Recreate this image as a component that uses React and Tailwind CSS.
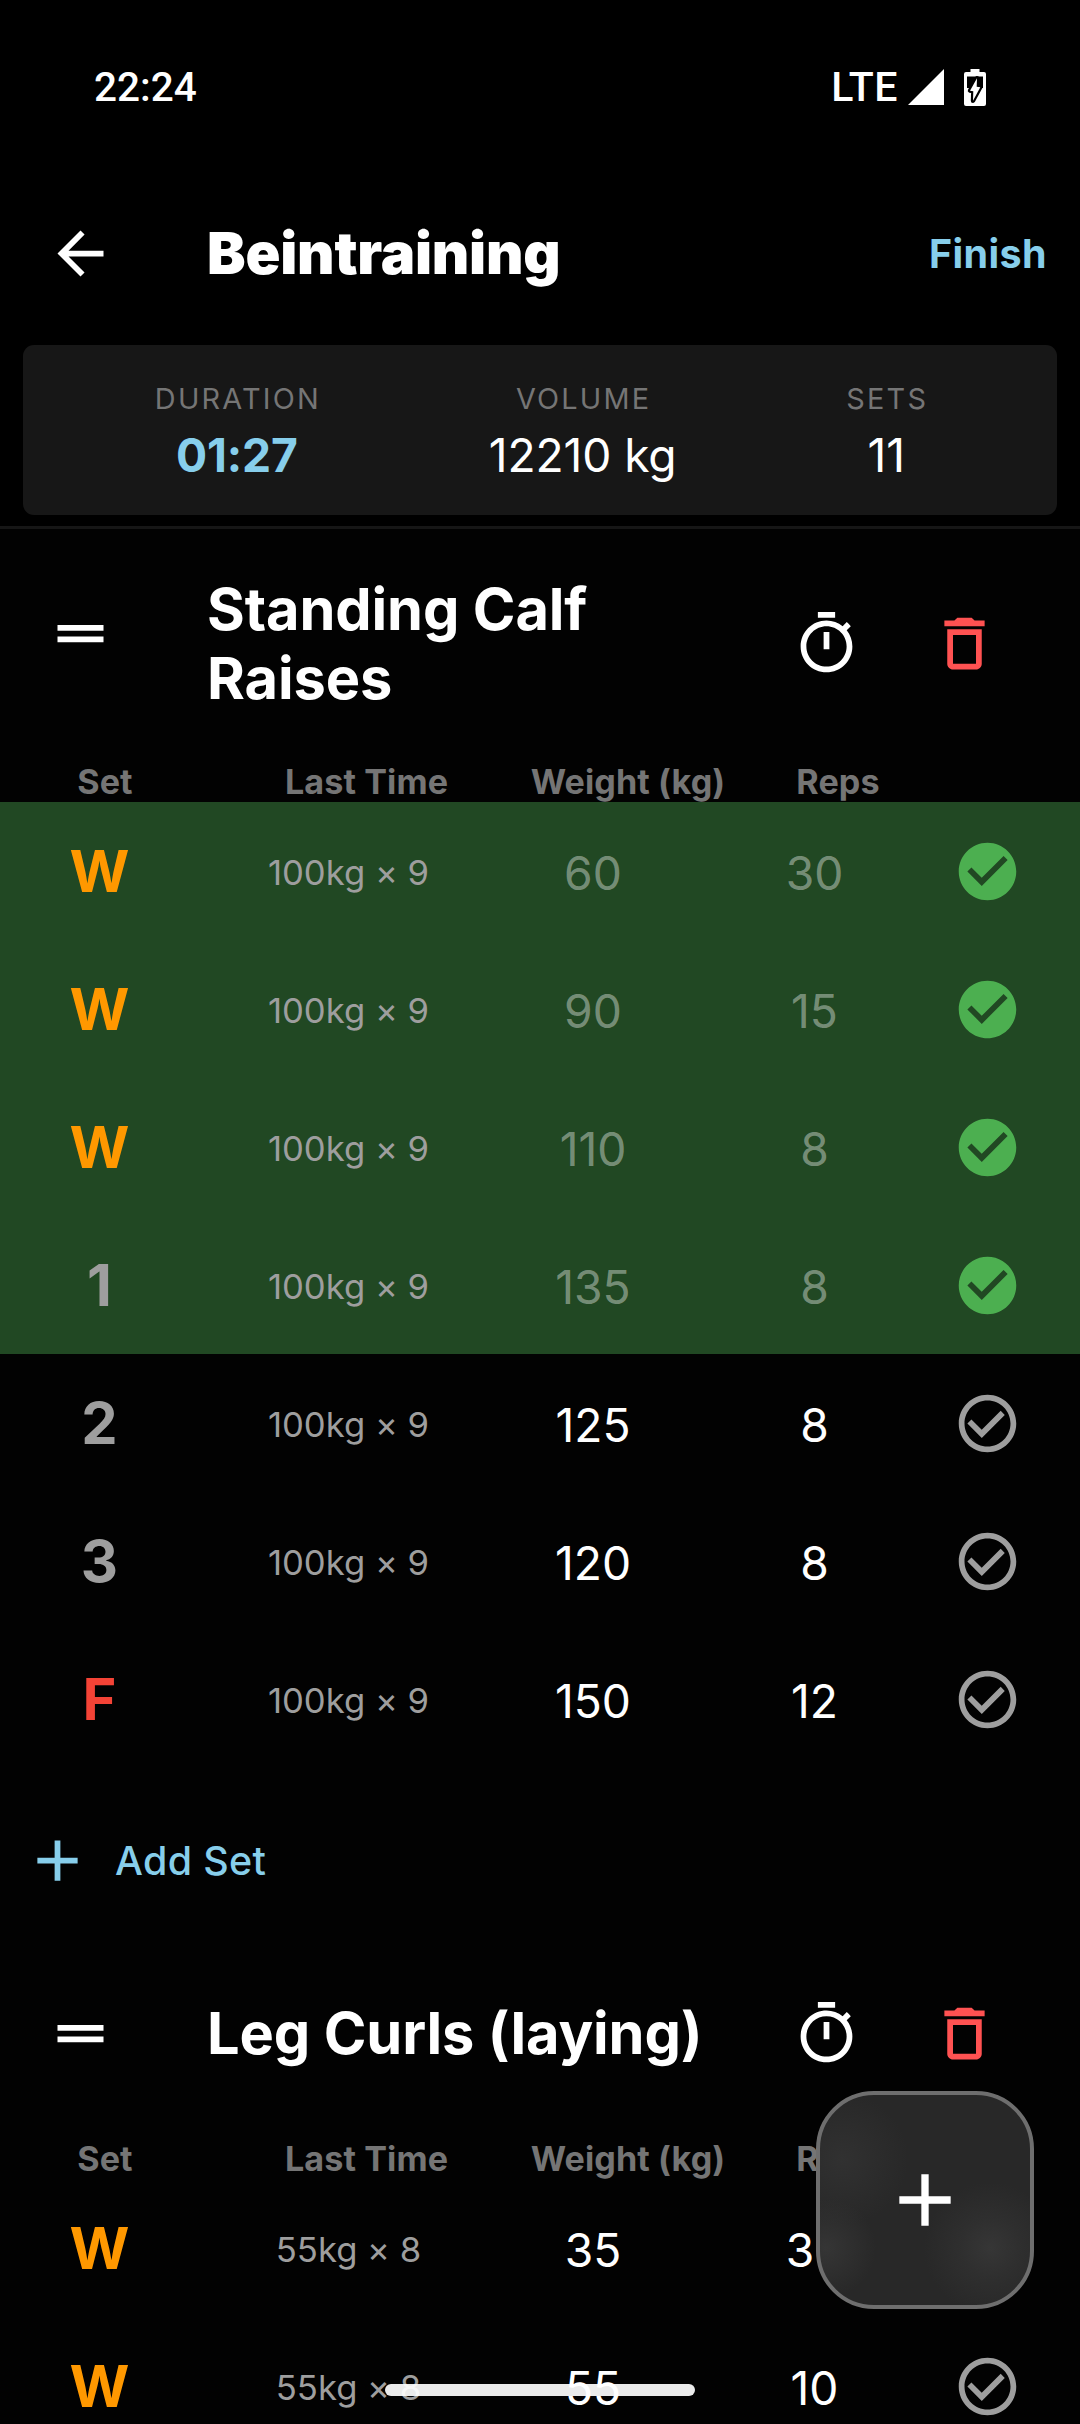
import React from "react";

const PATHS = {
  back: "M20 11H7.83l5.59-5.59L12 4l-8 8 8 8 1.41-1.41L7.83 13H20v-2z",
  drag: "M20 9H4v2h16V9zM4 15h16v-2H4v2z",
  timer:
    "M15 1H9v2h6V1zm-4 13h2V8h-2v6zm8.03-6.61l1.42-1.42c-.43-.51-.9-.99-1.41-1.41l-1.42 1.42C16.07 4.74 14.12 4 12 4c-4.97 0-9 4.03-9 9s4.02 9 9 9 9-4.03 9-9c0-2.12-.74-4.07-1.97-5.61zM12 20c-3.87 0-7-3.13-7-7s3.13-7 7-7 7 3.13 7 7-3.13 7-7 7z",
  trash:
    "M6 19c0 1.1.9 2 2 2h8c1.1 0 2-.9 2-2V7H6v12zM8 9h8v10H8V9zm7.5-5l-1-1h-5l-1 1H5v2h14V4h-3.5z",
  done:
    "M12 2C6.48 2 2 6.48 2 12s4.48 10 10 10 10-4.48 10-10S17.52 2 12 2zm-2 15l-5-5 1.41-1.41L10 14.17l7.59-7.59L19 8l-9 9z",
  todo:
    "M16.59 7.58L10 14.17l-3.59-3.58L5 12l5 5 8-8-1.41-1.42zM12 2C6.48 2 2 6.48 2 12s4.48 10 10 10 10-4.48 10-10S17.52 2 12 2zm0 18c-4.42 0-8-3.58-8-8s3.58-8 8-8 8 3.58 8 8-3.58 8-8 8z",
  plus: "M19 13h-6v6h-2v-6H5v-2h6V5h2v6h6v2z",
};

function Icon({ name, className = "size-[69px]" }) {
  return (
    <svg viewBox="0 0 24 24" fill="currentColor" className={`shrink-0 ${className}`}>
      <path d={PATHS[name]} />
    </svg>
  );
}

function StatusBar() {
  return (
    <div className="flex h-[174px] items-center justify-between bg-black pl-[94px] pr-[94px] font-['Roboto',sans-serif] font-medium">
      <span className="text-[40.5px] leading-none">22:24</span>
      <div className="flex items-center">
        <span className="mr-[10px] text-[41px] leading-none tracking-[0.5px]">LTE</span>
        <svg viewBox="0 0 36 36" className="h-9 w-9" fill="white">
          <path d="M36 0v36H0z" />
        </svg>
        <svg viewBox="0 0 22 37" className="ml-5 h-[37px] w-[22px]">
          <path d="M6.500 0h9v3H20a2 2 0 0 1 2 2v30a2 2 0 0 1-2 2H2a2 2 0 0 1-2-2V5a2 2 0 0 1 2-2h4.500z" fill="white" />
          <path d="M3 7.500h16V19H3z" fill="black" />
          <path
            d="M13 9.300L6 21.700l3.300.6L9 31.700l7.300-13.400-3.600-.6z"
            fill="white"
            stroke="black"
            strokeWidth="4.400"
            strokeLinejoin="round"
            paintOrder="stroke"
          />
        </svg>
      </div>
    </div>
  );
}

function Stat({ label, children }) {
  return (
    <div className="flex flex-col items-center">
      <div className="-mr-[2px] text-[28.875px] leading-[35px] tracking-[2.2px] text-[#757575]">{label}</div>
      <div className="mt-[11px] text-[46.2px] leading-[56px] tracking-[-0.1px]">{children}</div>
    </div>
  );
}

const LABEL_COLORS = { W: "text-[#ff9800]", F: "text-[#f44336]" };

function SetRow({ label, last, weight, reps, done }) {
  return (
    <div
      className={`grid h-[138px] grid-cols-[199px_299px_190px_253px_93px] place-items-center ${done ? "bg-[#214823]" : ""}`}
    >
      <span className={`pt-px text-[57.75px] font-bold leading-none ${LABEL_COLORS[label] ?? "text-[#9e9e9e]"}`}>
        {label}
      </span>
      <span className="pt-[3px] text-[34.65px] leading-none text-[#9e9e9e] [font-feature-settings:'calt'_0]">{last}</span>
      <span className={`pt-1 text-[46.2px] leading-none ${done ? "text-white/40" : "text-white"}`}>{weight}</span>
      <span className={`pt-1 text-[46.2px] leading-none ${done ? "text-white/40" : "text-white"}`}>{reps}</span>
      <span className={done ? "text-[#4caf50]" : "text-[#9e9e9e]"}>
        <Icon name={done ? "done" : "todo"} />
      </span>
    </div>
  );
}

function Exercise({ title, headClass, handleClass, sets }) {
  return (
    <section>
      <div className={`flex items-center pl-[46px] ${headClass}`}>
        <Icon name="drag" className={`size-[69px] ${handleClass}`} />
        <h2 className="ml-[92px] w-[530px] text-[57.75px] font-bold leading-[69px] tracking-[-0.12px]">{title}</h2>
        <Icon name="timer" className="ml-[55px] size-[69px]" />
        <span className="ml-[69px] text-[#ff5252]">
          <Icon name="trash" />
        </span>
      </div>
      <div className="grid h-[45px] grid-cols-[210px_313px_210px_210px] place-items-center whitespace-nowrap pt-1.5 text-[34.125px] font-bold leading-none tracking-[0.1px] text-[#757575]">
        <span>Set</span>
        <span>Last Time</span>
        <span>Weight (kg)</span>
        <span>Reps</span>
      </div>
      {sets.map((s, i) => (
        <SetRow key={i} {...s} />
      ))}
    </section>
  );
}

const CALF = [
  ["W", 60, 30, true],
  ["W", 90, 15, true],
  ["W", 110, 8, true],
  ["1", 135, 8, true],
  ["2", 125, 8, false],
  ["3", 120, 8, false],
  ["F", 150, 12, false],
].map(([label, weight, reps, done]) => ({ label, weight, reps, done, last: "100kg × 9" }));

const CURLS = [
  ["W", 35, 30],
  ["W", 55, 10],
].map(([label, weight, reps]) => ({ label, weight, reps, done: false, last: "55kg × 8" }));

export default function App() {
  return (
    <div className="relative h-[2424px] w-[1080px] overflow-hidden bg-[#020202] font-['Inter',sans-serif] text-white">
      <StatusBar />
      <header className="flex h-[160px] items-center bg-black pl-[46px] pr-[33px]">
        <Icon name="back" className="mb-px size-[69px]" />
        <h1 className="ml-[92px] grow text-[57.75px] font-black leading-none tracking-[-0.2px]">Beintraining</h1>
        <span className="pt-0.5 text-[39.4px] font-bold leading-none tracking-[0.4px] text-[#87ceeb]">Finish</span>
      </header>
      <div className="border-b-[3px] border-[#161616] bg-black px-[23px] py-[11px]">
        <div className="flex h-[170px] justify-around rounded-[11px] bg-[#171717] pl-[47px] pr-[46px] pt-[36px]">
          <Stat label="DURATION">
            <span className="font-bold text-[#87ceeb]">01:27</span>
          </Stat>
          <Stat label="VOLUME">12210 kg</Stat>
          <Stat label="SETS">11</Stat>
        </div>
      </div>
      <Exercise title="Standing Calf Raises" headClass="h-[228px] pt-px" handleClass="mb-[21px]" sets={CALF} />
      <div className="flex h-[185px] items-center pl-[23px] text-[#87ceeb]">
        <Icon name="plus" />
        <span className="ml-[23px] pt-[3px] text-[39.4px] font-medium leading-none tracking-[0.35px]">Add Set</span>
      </div>
      <Exercise title="Leg Curls (laying)" headClass="h-[181px] pb-[21px]" handleClass="mb-0" sets={CURLS} />

      <button className="absolute left-[816px] top-[2091px] flex size-[218px] items-center justify-center rounded-[58px] border-4 border-[#6e6e6e] bg-[#282828] bg-[radial-gradient(circle_at_170px_153px,#363636_0px,#33333399_30px,#28282800_66px),radial-gradient(circle_at_6px_153px,#353535_0px,#28282800_50px),radial-gradient(circle_at_22px_64px,#313131_0px,#28282800_66px)]">
        <Icon name="plus" className="size-[88px]" />
      </button>
      <div className="absolute left-[385px] top-[2384px] h-3 w-[310px] rounded-full bg-white/92" />
    </div>
  );
}
